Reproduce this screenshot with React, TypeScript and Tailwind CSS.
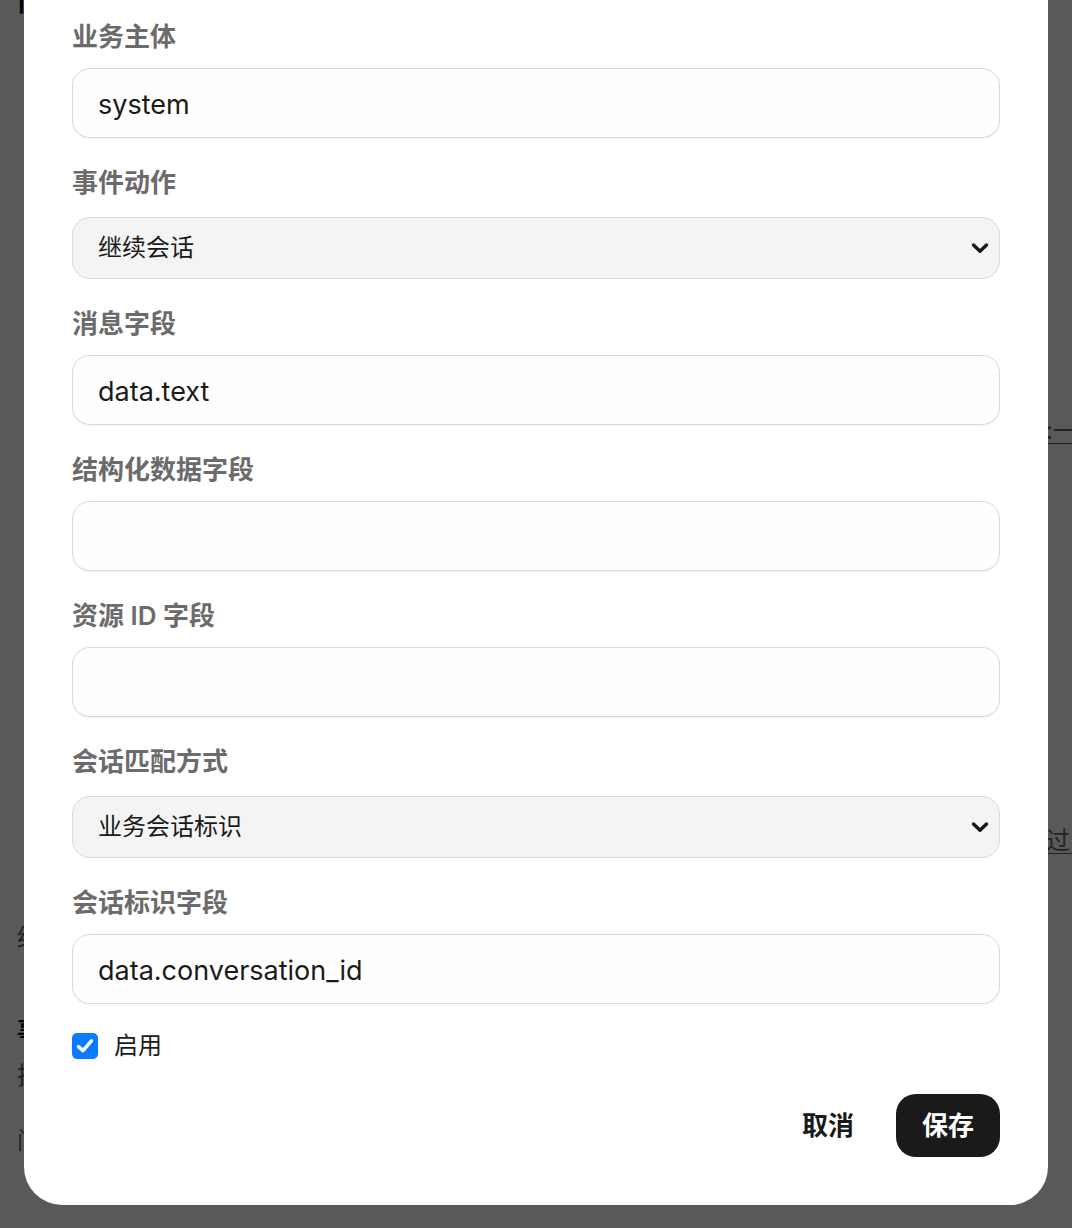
import { type ReactNode } from "react";

const FONT = { fontFamily: 'Inter, "Noto Sans CJK SC", sans-serif' };

function Chevron() {
  return (
    <svg
      className="pointer-events-none absolute top-1/2 right-[10px] size-[20px] -translate-y-1/2"
      fill="none"
      viewBox="0 0 20 20"
    >
      <polyline
        points="3.5,7 10,13.2 16.5,7"
        stroke="#1a1a1a"
        strokeLinecap="round"
        strokeLinejoin="round"
        strokeWidth="3.4"
      />
    </svg>
  );
}

function FieldLabel({ children }: { children: ReactNode }) {
  return (
    <div className="h-[32px] font-semibold text-[#6b6b6b] text-[26px] leading-[32px]">
      {children}
    </div>
  );
}

function TextField({ label, value }: { label: string; value: string }) {
  return (
    <div className="flex flex-col">
      <FieldLabel>{label}</FieldLabel>
      <input
        className="mt-[15px] h-[70px] w-full rounded-[18px] border-[1.5px] border-[#d9d9d9] bg-[#fefefe] px-[25px] pt-[3px] text-[#1a1a1a] text-[27px] shadow-[0_1px_2px_rgba(0,0,0,0.06)] outline-none"
        defaultValue={value}
        style={FONT}
      />
    </div>
  );
}

function SelectField({ label, options }: { label: string; options: string[] }) {
  return (
    <div className="flex flex-col">
      <FieldLabel>{label}</FieldLabel>
      <div className="relative mt-[18px]">
        <select
          className="h-[62px] w-full appearance-none rounded-[18px] border-[1.5px] border-[#d9d9d9] bg-[#f4f4f4] px-[25px] text-[#1a1a1a] text-[24px] outline-none"
          defaultValue={options[0]}
          style={FONT}
        >
          {options.map((o) => (
            <option key={o}>{o}</option>
          ))}
        </select>
        <Chevron />
      </div>
    </div>
  );
}

// Faint page content sitting under the dim overlay; only its edges show.
function BackgroundPage() {
  const rows: { h: number; left?: string; right?: string; bold?: boolean }[] = [
    { h: 14, left: "| 配置", bold: true },
    { h: 401 },
    { h: 32, right: ":一" },
    { h: 378 },
    { h: 32, right: "过 :" },
    { h: 65 },
    { h: 32, left: "结构化数据" },
    { h: 61 },
    { h: 32, left: "事件订阅", bold: true },
    { h: 13 },
    { h: 32, left: "把外部事件" },
    { h: 33 },
    { h: 32, left: "问题" },
  ];
  return (
    <div className="h-[1228px] overflow-hidden bg-white" style={FONT}>
      <div className="-mt-[14px] flex flex-col">
        {rows.map((r, i) => (
          <div
            className="flex items-center justify-between whitespace-nowrap pl-[17px] text-[#666] text-[24px]"
            key={i}
            style={{ height: r.h + (i === 0 ? 14 : 0) }}
          >
            <span className={r.bold ? "font-bold text-[#111]" : ""}>{r.left}</span>
            {r.right ? (
              <span className="w-[26px] overflow-hidden underline decoration-1 underline-offset-4">
                {r.right}
              </span>
            ) : null}
          </div>
        ))}
      </div>
    </div>
  );
}

export default function App() {
  return (
    <div className="relative h-[1228px] w-full overflow-hidden" style={FONT}>
      <BackgroundPage />
      <div className="absolute inset-0 bg-black/65">
        <div className="-mt-[27px] mx-[24px] rounded-b-[38px] bg-white px-[48px] pt-[48px] pb-[48px]">
          <div className="flex flex-col gap-[29px]">
            <TextField label="业务主体" value="system" />
            <SelectField label="事件动作" options={["继续会话", "新建会话"]} />
            <TextField label="消息字段" value="data.text" />
            <TextField label="结构化数据字段" value="" />
            <TextField label="资源 ID 字段" value="" />
            <SelectField label="会话匹配方式" options={["业务会话标识", "资源 ID"]} />
            <TextField label="会话标识字段" value="data.conversation_id" />
          </div>

          <label className="mt-[26px] flex h-[32px] items-center gap-[16px]">
            <span className="flex size-[26px] items-center justify-center rounded-[5px] bg-[#0a7aff]">
              <svg className="size-[20px]" fill="none" viewBox="0 0 18 18">
                <polyline
                  points="3.2,9.6 7.2,13.2 14.8,4.4"
                  stroke="white"
                  strokeLinecap="round"
                  strokeLinejoin="round"
                  strokeWidth="3.2"
                />
              </svg>
            </span>
            <span className="text-[#1a1a1a] text-[24px]">启用</span>
          </label>

          <div className="mt-[32px] flex items-center justify-end gap-[16px]">
            <button
              className="h-[63px] rounded-[20px] px-[26px] font-bold text-[#1a1a1a] text-[26px]"
              type="button"
            >
              取消
            </button>
            <button
              className="h-[63px] w-[104px] rounded-[20px] bg-[#1a1a1a] font-bold text-[26px] text-white"
              type="button"
            >
              保存
            </button>
          </div>
        </div>
      </div>
    </div>
  );
}
